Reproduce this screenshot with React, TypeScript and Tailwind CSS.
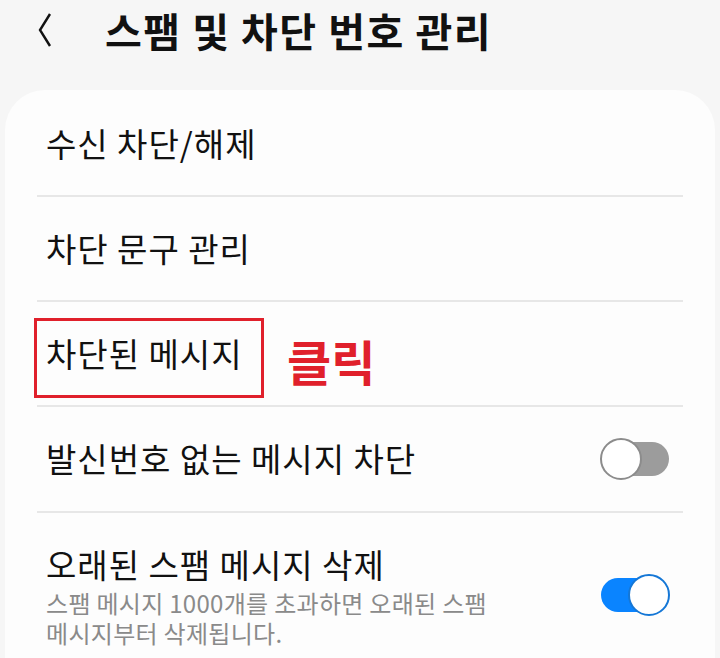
const font = { fontFamily: '"Noto Sans CJK KR", "Noto Sans", sans-serif' };

function Toggle({ on }: { on: boolean }) {
  if (on) {
    return (
      <div className="relative w-[69px] h-[42px] shrink-0">
        <div className="absolute left-0 top-[4px] w-[56px] h-[34px] rounded-full bg-[#0a84ff]" />
        <div className="absolute right-0 top-0 w-[42px] h-[42px] rounded-full bg-white border-[2px] border-[#1577d6]" />
      </div>
    );
  }
  return (
    <div className="relative w-[69px] h-[42px] shrink-0">
      <div className="absolute right-0 top-[4px] w-[56px] h-[34px] rounded-full bg-[#9c9c9c]" />
      <div className="absolute left-0 top-0 w-[42px] h-[42px] rounded-full bg-white border-[2px] border-[#8c8c8c]" />
    </div>
  );
}

export default function App() {
  return (
    <div className="w-[720px] h-[658px] bg-[#f6f6f6] overflow-hidden" style={font}>
      <header className="h-[90px] flex items-center pl-[38px] pb-[30px]">
        <svg width="14" height="34" viewBox="0 0 14 34" className="shrink-0">
          <polyline points="12,1 2,17 12,33" fill="none" stroke="#111" strokeWidth="2.4" />
        </svg>
        <h1 className="ml-[53px] text-[40px] font-bold text-[#111] tracking-[1.5px] leading-none">
          스팸 및 차단 번호 관리
        </h1>
      </header>

      <div className="mx-[5px] bg-[#fdfdfd] rounded-t-[40px] pt-[2px]">
        <div className="h-[105px] mx-[32px] flex items-center border-b-2 border-[#e7e7e7]">
          <span className="pl-[9px] text-[33px] tracking-[1px] text-[#111]">수신 차단/해제</span>
        </div>
        <div className="h-[105px] mx-[32px] flex items-center border-b-2 border-[#e7e7e7]">
          <span className="pl-[9px] text-[33px] tracking-[1px] text-[#111]">차단 문구 관리</span>
        </div>
        <div className="relative h-[105px] mx-[32px] flex items-center border-b-2 border-[#e7e7e7]">
          <span className="pl-[9px] text-[33px] tracking-[1px] text-[#111]">차단된 메시지</span>
          <div className="absolute left-[-3px] top-[16px] w-[230px] h-[80px] border-[3px] border-[#e0202b]" />
          <span className="absolute left-[250px] top-[34px] text-[48px] font-bold text-[#e0202b] leading-none">
            클릭
          </span>
        </div>
        <div className="h-[106px] mx-[32px] flex items-center justify-between border-b-2 border-[#e7e7e7]">
          <span className="pl-[9px] text-[33px] tracking-[1px] text-[#111]">발신번호 없는 메시지 차단</span>
          <div className="mr-[14px]">
            <Toggle on={false} />
          </div>
        </div>
        <div className="h-[150px] mx-[32px] flex items-start justify-between pt-[31px]">
          <div className="pl-[9px]">
            <div className="text-[33px] tracking-[1px] text-[#111] leading-[40px]">오래된 스팸 메시지 삭제</div>
            <div className="mt-[4px] text-[24px] tracking-[0.3px] text-[#8a8a8a] leading-[30px]">
              <div>스팸 메시지 1000개를 초과하면 오래된 스팸</div>
              <div>메시지부터 삭제됩니다.</div>
            </div>
          </div>
          <div className="mr-[13px] mt-[30px]">
            <Toggle on={true} />
          </div>
        </div>
      </div>
    </div>
  );
}
